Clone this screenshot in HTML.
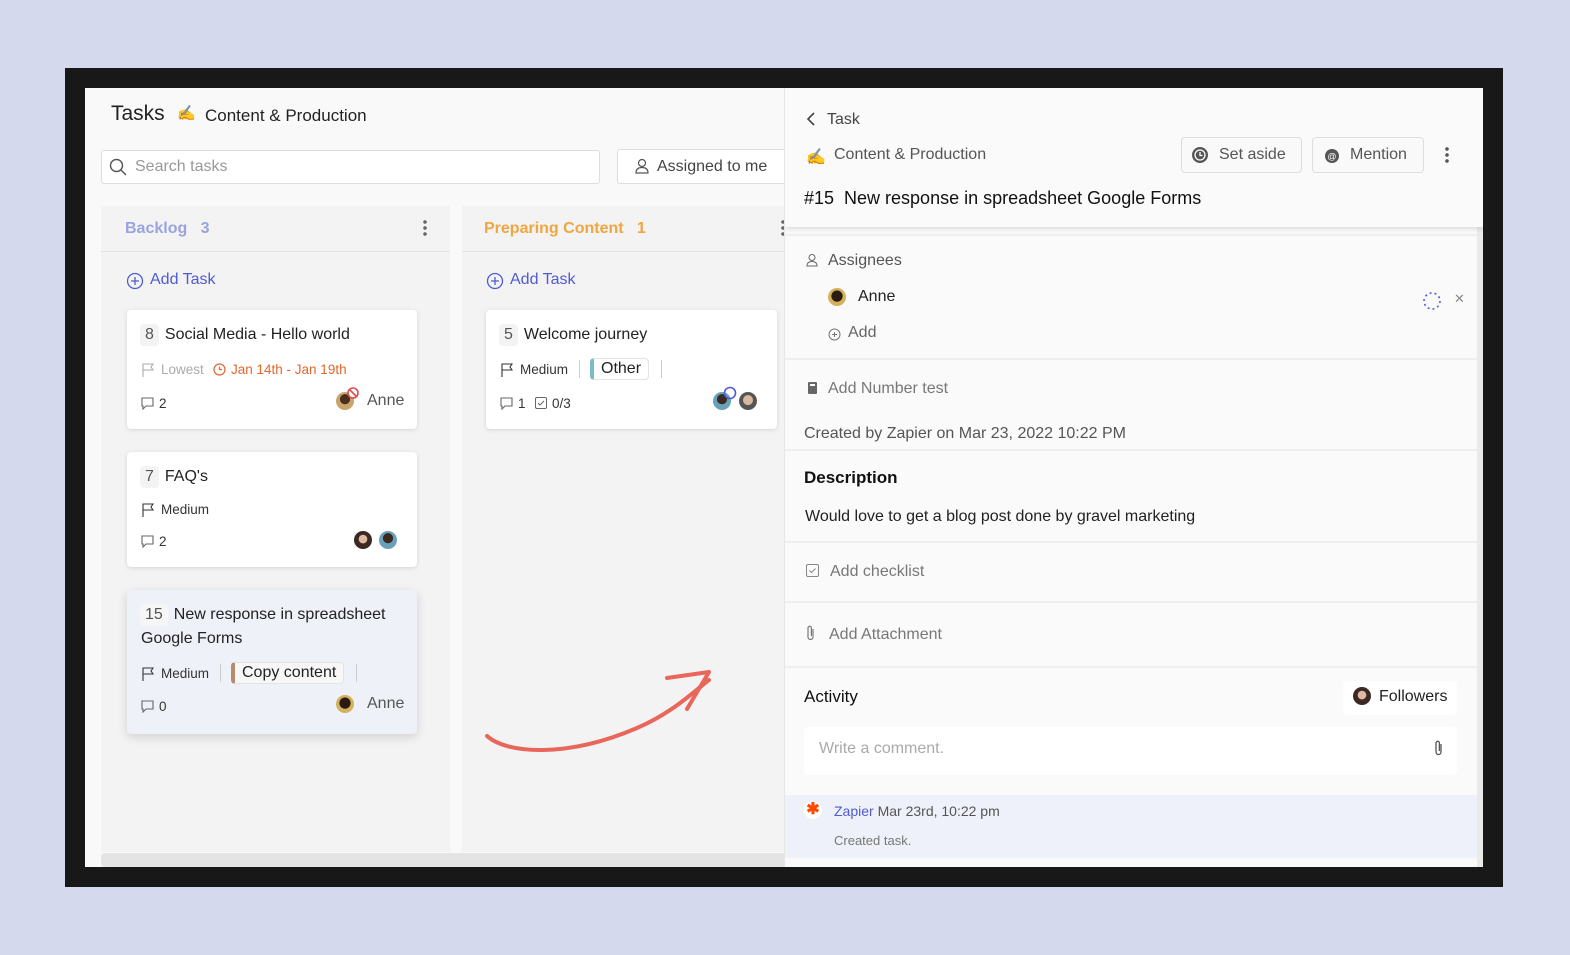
<!DOCTYPE html>
<html><head><meta charset="utf-8"><style>
*{box-sizing:border-box;margin:0;padding:0}
body{width:1570px;height:955px;background:#d5d9ee;font-family:"Liberation Sans",sans-serif;position:relative;overflow:hidden;color:#222}
.a{position:absolute}
.frame{left:65px;top:68px;width:1438px;height:819px;background:#181818}
.left{left:85px;top:88px;width:700px;height:779px;background:#f9f9f9;overflow:hidden}
.right{left:784px;top:88px;width:699px;height:779px;background:#fafafa;overflow:hidden;border-left:1px solid #e6e6e6}
.t{font-size:16px;white-space:nowrap}
.card{background:#fff;border-radius:4px;box-shadow:0 1px 5px rgba(0,0,0,.13)}
.num{display:inline-block;background:#f3f3f3;border-radius:4px;padding:2px 5px;color:#555;margin-right:6px}
.sm{font-size:13.5px;color:#333}
.av{border-radius:50%;width:18px;height:18px;background:radial-gradient(circle at 50% 40%,#4a2f1f 35%,#c9a46a 37%)}
.line{height:2px;background:#eeeeee;left:0;width:692px}
</style></head><body>
<div class="a frame"></div>
<div class="a left">
 <div class="a t" style="left:26px;top:14px;font-size:21px;color:#222">Tasks</div>
 <div class="a t" style="left:92px;top:16px;font-size:15px">✍️</div>
 <div class="a t" style="left:120px;top:18px;font-size:17px">Content &amp; Production</div>
 <div class="a" style="left:16px;top:62px;width:499px;height:34px;background:#fff;border:1px solid #ddd;border-radius:3px"></div>
 <svg class="a" style="left:24px;top:70px" width="18" height="18"><circle cx="7.5" cy="7.5" r="6" fill="none" stroke="#555" stroke-width="1.4"/><path d="M12 12l5 5" stroke="#555" stroke-width="1.4"/></svg>
 <div class="a t" style="left:50px;top:70px;color:#999">Search tasks</div>
 <div class="a" style="left:532px;top:61px;width:170px;height:35px;background:#fff;border:1px solid #ddd;border-radius:3px"></div>
 <svg class="a" style="left:550px;top:70px" width="14" height="16"><circle cx="7" cy="5" r="3.5" fill="none" stroke="#555" stroke-width="1.2"/><path d="M1 15c0-4 2.5-5.5 6-5.5s6 1.5 6 5.5z" fill="none" stroke="#555" stroke-width="1.2"/></svg>
 <div class="a t" style="left:572px;top:70px;color:#444">Assigned to me</div>
 <div class="a" style="left:16px;top:118px;width:349px;height:646px;background:#f3f3f3"></div>
 <div class="a" style="left:16px;top:163px;width:349px;height:1px;background:#e2e2e2"></div>
 <div class="a" style="left:377px;top:118px;width:330px;height:646px;background:#f3f3f3"></div>
 <div class="a" style="left:377px;top:163px;width:330px;height:1px;background:#e2e2e2"></div>
 <div class="a t" style="left:40px;top:132px;color:#9aa3e0;font-weight:bold">Backlog &nbsp; 3</div>
 <div class="a" style="left:338px;top:131px;width:4px;height:18px;background:radial-gradient(circle,#666 1.6px,transparent 2px) 0 0/4px 6px"></div>
 <div class="a t" style="left:399px;top:132px;color:#f0a640;font-weight:bold">Preparing Content &nbsp; 1</div>
 <div class="a" style="left:696px;top:131px;width:4px;height:18px;background:radial-gradient(circle,#666 1.6px,transparent 2px) 0 0/4px 6px"></div>
 <svg class="a" style="left:41px;top:184px" width="18" height="18"><circle cx="9" cy="9" r="7.5" fill="none" stroke="#4f5bd5" stroke-width="1.3"/><path d="M9 5v8M5 9h8" stroke="#4f5bd5" stroke-width="1.3"/></svg>
 <div class="a t" style="left:65px;top:183px;color:#4f5bd5">Add Task</div>
 <svg class="a" style="left:401px;top:184px" width="18" height="18"><circle cx="9" cy="9" r="7.5" fill="none" stroke="#4f5bd5" stroke-width="1.3"/><path d="M9 5v8M5 9h8" stroke="#4f5bd5" stroke-width="1.3"/></svg>
 <div class="a t" style="left:425px;top:183px;color:#4f5bd5">Add Task</div>
 <div class="a card" style="left:42px;top:222px;width:290px;height:119px"></div>
 <div class="a t" style="left:55px;top:236px"><span class="num">8</span>Social Media - Hello world</div>
 <svg class="a" style="left:57px;top:275px" width="12" height="14"><path d="M1 14V1h10l-2 3 2 3H1" fill="none" stroke="#aaa" stroke-width="1.1"/></svg>
 <div class="a sm" style="left:76px;top:274px;color:#aaa">Lowest</div>
 <svg class="a" style="left:128px;top:275px" width="13" height="13"><circle cx="6.5" cy="6.5" r="5.5" fill="none" stroke="#e2672e" stroke-width="1.2"/><path d="M6.5 3.5v3h2.5" fill="none" stroke="#e2672e" stroke-width="1.2"/></svg>
 <div class="a sm" style="left:146px;top:274px;color:#e2672e">Jan 14th - Jan 19th</div>
 <svg class="a" style="left:56px;top:309px" width="13" height="13"><path d="M1 1h11v8H5l-3 3V9H1z" fill="none" stroke="#666" stroke-width="1.1"/></svg>
 <div class="a sm" style="left:74px;top:308px">2</div>
 <div class="a av" style="left:251px;top:304px"></div>
 <svg class="a" style="left:262px;top:299px" width="12" height="12"><circle cx="6" cy="6" r="5" fill="#fff" stroke="#e04a4a" stroke-width="1.6"/><path d="M2.5 2.5l7 7" stroke="#e04a4a" stroke-width="1.6"/></svg>
 <div class="a t" style="left:282px;top:304px;color:#555">Anne</div>
 <div class="a card" style="left:42px;top:364px;width:290px;height:115px"></div>
 <div class="a t" style="left:55px;top:378px"><span class="num">7</span>FAQ's</div>
 <svg class="a" style="left:57px;top:415px" width="12" height="14"><path d="M1 14V1h10l-2 3 2 3H1" fill="none" stroke="#333" stroke-width="1.1"/></svg>
 <div class="a sm" style="left:76px;top:414px">Medium</div>
 <svg class="a" style="left:56px;top:447px" width="13" height="13"><path d="M1 1h11v8H5l-3 3V9H1z" fill="none" stroke="#666" stroke-width="1.1"/></svg>
 <div class="a sm" style="left:74px;top:446px">2</div>
 <div class="a av" style="left:269px;top:443px;background:radial-gradient(circle at 50% 45%,#e1b9a0 30%,#3b2a22 34%)"></div>
 <div class="a av" style="left:294px;top:443px;background:radial-gradient(circle at 50% 40%,#3a2a22 35%,#6aa0b8 37%)"></div>
 <div class="a card" style="left:42px;top:502px;width:290px;height:144px;background:#eef1f8;box-shadow:0 3px 10px rgba(0,0,0,.15)"></div>
 <div class="a t" style="left:55px;top:516px"><span class="num" style="background:#f6f6f6">15</span>New response in spreadsheet</div>
 <div class="a t" style="left:56px;top:542px">Google Forms</div>
 <svg class="a" style="left:57px;top:579px" width="12" height="14"><path d="M1 14V1h10l-2 3 2 3H1" fill="none" stroke="#333" stroke-width="1.1"/></svg>
 <div class="a sm" style="left:76px;top:578px">Medium</div>
 <div class="a" style="left:135px;top:576px;width:1px;height:18px;background:#ccc"></div>
 <div class="a" style="left:146px;top:574px;width:113px;height:22px;border:1px solid #e3e3e3;border-left:4px solid #b78b6c;border-radius:4px;background:#f7f7f7"></div>
 <div class="a t" style="left:157px;top:576px">Copy content</div>
 <div class="a" style="left:271px;top:576px;width:1px;height:18px;background:#ccc"></div>
 <svg class="a" style="left:56px;top:612px" width="13" height="13"><path d="M1 1h11v8H5l-3 3V9H1z" fill="none" stroke="#666" stroke-width="1.1"/></svg>
 <div class="a sm" style="left:74px;top:611px">0</div>
 <div class="a av" style="left:251px;top:607px;background:radial-gradient(circle at 50% 45%,#2a1a12 40%,#d4b25c 44%)"></div>
 <div class="a t" style="left:282px;top:607px;color:#555">Anne</div>
 <div class="a card" style="left:401px;top:222px;width:291px;height:119px"></div>
 <div class="a t" style="left:414px;top:236px"><span class="num">5</span>Welcome journey</div>
 <svg class="a" style="left:416px;top:275px" width="12" height="14"><path d="M1 14V1h10l-2 3 2 3H1" fill="none" stroke="#333" stroke-width="1.1"/></svg>
 <div class="a sm" style="left:435px;top:274px">Medium</div>
 <div class="a" style="left:494px;top:272px;width:1px;height:18px;background:#ccc"></div>
 <div class="a" style="left:505px;top:270px;width:59px;height:22px;border:1px solid #e3e3e3;border-left:4px solid #7bbacb;border-radius:4px"></div>
 <div class="a t" style="left:516px;top:272px">Other</div>
 <div class="a" style="left:576px;top:272px;width:1px;height:18px;background:#ccc"></div>
 <svg class="a" style="left:415px;top:309px" width="13" height="13"><path d="M1 1h11v8H5l-3 3V9H1z" fill="none" stroke="#666" stroke-width="1.1"/></svg>
 <div class="a sm" style="left:433px;top:308px">1</div>
 <svg class="a" style="left:450px;top:309px" width="12" height="12"><rect x=".5" y=".5" width="11" height="11" rx="1.5" fill="none" stroke="#666"/><path d="M3 6l2 2 4-4" fill="none" stroke="#666"/></svg>
 <div class="a sm" style="left:467px;top:308px">0/3</div>
 <div class="a av" style="left:628px;top:304px;background:radial-gradient(circle at 50% 40%,#3a2a22 35%,#6aa0b8 37%)"></div>
 <svg class="a" style="left:638px;top:298px" width="14" height="14"><circle cx="7" cy="7" r="5.5" fill="none" stroke="#4f5bd5" stroke-width="1.6"/></svg>
 <div class="a av" style="left:654px;top:304px;background:radial-gradient(circle at 50% 45%,#d8b8a0 35%,#555 39%)"></div>
 <svg class="a" style="left:390px;top:570px" width="260" height="120"><path d="M12 78c20 18 80 22 150-8 35-15 55-35 72-48" fill="none" stroke="#e8665a" stroke-width="4" stroke-linecap="round"/><path d="M192 20l42-6-22 37" fill="none" stroke="#e8665a" stroke-width="4" stroke-linecap="round" stroke-linejoin="round"/></svg>
 <div class="a" style="left:16px;top:765px;width:700px;height:14px;background:#e4e4e4;border-radius:4px"></div>
</div>
<div class="a right">
 <div class="a" style="left:0;top:0;width:699px;height:139px;background:#fafafa;box-shadow:0 2px 5px rgba(0,0,0,.12);z-index:2"></div>
 <div style="position:absolute;left:0;top:0;width:699px;height:139px;z-index:3">
  <svg class="a" style="left:21px;top:23px" width="10" height="16"><path d="M8 2L2 8l6 6" fill="none" stroke="#444" stroke-width="1.6"/></svg>
  <div class="a t" style="left:42px;top:23px;color:#444">Task</div>
  <div class="a t" style="left:21px;top:59px">✍️</div>
  <div class="a t" style="left:49px;top:58px;color:#555">Content &amp; Production</div>
  <div class="a" style="left:396px;top:49px;width:121px;height:36px;border:1px solid #ddd;border-radius:4px;background:#f9f9f9"></div>
  <svg class="a" style="left:406px;top:58px" width="18" height="18"><circle cx="9" cy="9" r="8" fill="#555"/><circle cx="9" cy="9" r="5" fill="none" stroke="#fff" stroke-width="1.3"/><path d="M9 6v3.5h2.5" fill="none" stroke="#fff" stroke-width="1.3"/></svg>
  <div class="a t" style="left:434px;top:58px;color:#555">Set aside</div>
  <div class="a" style="left:527px;top:49px;width:112px;height:36px;border:1px solid #ddd;border-radius:4px;background:#f9f9f9"></div>
  <svg class="a" style="left:539px;top:60px" width="16" height="16"><circle cx="8" cy="8" r="7" fill="#555"/><text x="8" y="11.5" font-size="9" text-anchor="middle" fill="#fff" font-family="Liberation Sans">@</text></svg>
  <div class="a t" style="left:565px;top:58px;color:#555">Mention</div>
  <div class="a" style="left:660px;top:58px;width:4px;height:18px;background:radial-gradient(circle,#555 1.6px,transparent 2px) 0 0/4px 6px"></div>
  <div class="a t" style="left:19px;top:100px;font-size:18px;color:#111">#15&nbsp; New response in spreadsheet Google Forms</div>
 </div>
 <div class="a" style="left:692px;top:139px;width:7px;height:640px;background:#eaeaea"></div>
 <div class="a line" style="top:146px"></div>
 <svg class="a" style="left:21px;top:165px" width="12" height="14"><circle cx="6" cy="4.5" r="3" fill="none" stroke="#666"/><path d="M1 13c0-3.5 2-4.5 5-4.5s5 1 5 4.5z" fill="none" stroke="#666"/></svg>
 <div class="a t" style="left:43px;top:164px;color:#555">Assignees</div>
 <div class="a av" style="left:43px;top:200px;background:radial-gradient(circle at 50% 45%,#2a1a12 40%,#d4b25c 44%)"></div>
 <div class="a t" style="left:73px;top:200px">Anne</div>
 <svg class="a" style="left:637px;top:203px" width="20" height="20"><circle cx="10" cy="10" r="8" fill="none" stroke="#4f5bd5" stroke-width="1.6" stroke-dasharray="2 3"/></svg>
 <div class="a t" style="left:669px;top:203px;color:#888;font-size:13px">✕</div>
 <svg class="a" style="left:43px;top:240px" width="13" height="13"><circle cx="6.5" cy="6.5" r="5.5" fill="none" stroke="#777"/><path d="M6.5 4v5M4 6.5h5" stroke="#777"/></svg>
 <div class="a t" style="left:63px;top:236px;color:#666">Add</div>
 <div class="a line" style="top:270px"></div>
 <svg class="a" style="left:23px;top:294px" width="9" height="12"><rect width="9" height="12" rx="1" fill="#666"/><rect x="2" y="2" width="5" height="2" fill="#fff"/></svg>
 <div class="a t" style="left:43px;top:292px;color:#777">Add Number test</div>
 <div class="a t" style="left:19px;top:337px;color:#555">Created by Zapier on Mar 23, 2022 10:22 PM</div>
 <div class="a line" style="top:361px"></div>
 <div class="a t" style="left:19px;top:380px;font-size:17px;font-weight:bold;color:#111">Description</div>
 <div class="a t" style="left:20px;top:420px">Would love to get a blog post done by gravel marketing</div>
 <div class="a line" style="top:453px"></div>
 <svg class="a" style="left:21px;top:476px" width="13" height="13"><rect x=".5" y=".5" width="12" height="12" rx="1.5" fill="none" stroke="#888"/><path d="M3.5 6.5l2 2 4-4" fill="none" stroke="#888"/></svg>
 <div class="a t" style="left:45px;top:475px;color:#777">Add checklist</div>
 <div class="a line" style="top:513px"></div>
 <svg class="a" style="left:21px;top:537px" width="10" height="16"><path d="M7 4v8a2.5 2.5 0 01-5 0V3a1.7 1.7 0 013.4 0v8" fill="none" stroke="#777" stroke-width="1.2"/></svg>
 <div class="a t" style="left:44px;top:538px;color:#777">Add Attachment</div>
 <div class="a line" style="top:578px"></div>
 <div class="a t" style="left:19px;top:599px;font-size:17px;color:#111">Activity</div>
 <div class="a" style="left:558px;top:593px;width:114px;height:34px;background:#fff;border-radius:5px"></div>
 <div class="a av" style="left:568px;top:599px;background:radial-gradient(circle at 50% 45%,#e1b9a0 30%,#3b2a22 34%)"></div>
 <div class="a t" style="left:594px;top:600px">Followers</div>
 <div class="a" style="left:19px;top:639px;width:653px;height:48px;background:#fff;border-radius:4px"></div>
 <div class="a t" style="left:34px;top:652px;color:#aaa">Write a comment.</div>
 <svg class="a" style="left:649px;top:652px" width="10" height="17"><path d="M7 4v8a2.5 2.5 0 01-5 0V3a1.7 1.7 0 013.4 0v8" fill="none" stroke="#555" stroke-width="1.3"/></svg>
 <div class="a" style="left:0;top:707px;width:692px;height:63px;background:#eef1f9"></div>
 <div class="a" style="left:19px;top:713px;width:18px;height:18px;border-radius:50%;background:#fff;color:#ff4a00;font-size:16px;text-align:center;line-height:18px;font-weight:bold">✱</div>
 <div class="a t" style="left:49px;top:715px;font-size:14px;color:#4f5bd5">Zapier <span style="color:#555">Mar 23rd, 10:22 pm</span></div>
 <div class="a t" style="left:49px;top:745px;font-size:13px;color:#777">Created task.</div>
</div>
</body></html>
